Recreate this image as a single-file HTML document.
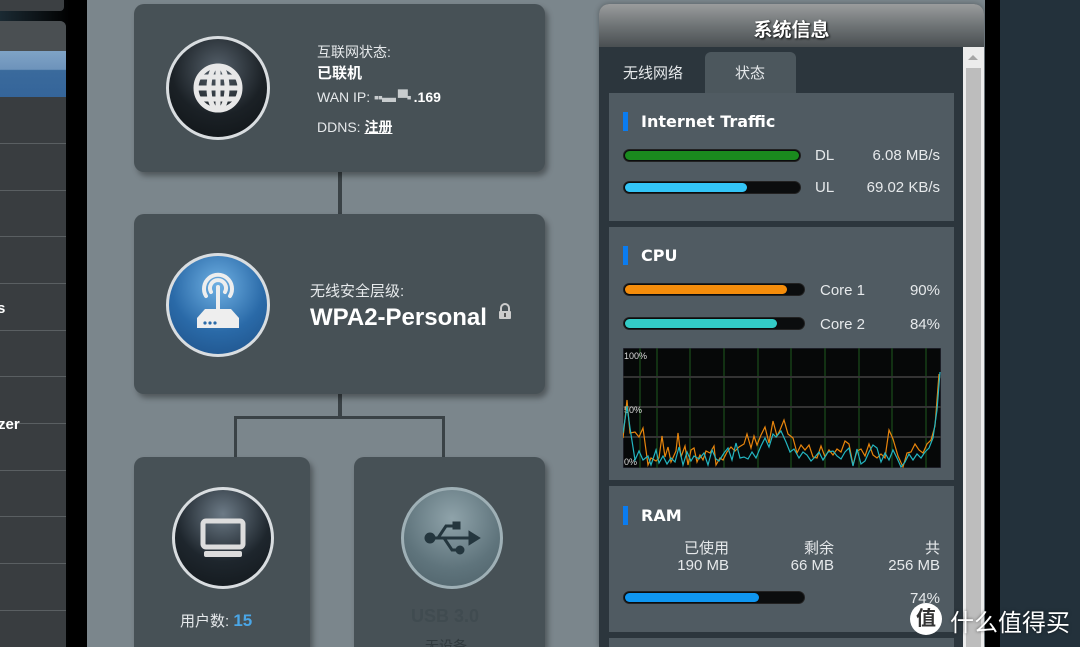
<!DOCTYPE html><html><head><meta charset="utf-8"><style>
*{margin:0;padding:0;box-sizing:border-box}
html{width:1080px;height:647px;overflow:hidden}
body{width:1080px;height:647px;overflow:hidden;background:#7b868c;position:relative;font-family:"Liberation Sans","Noto Sans CJK SC",sans-serif;color:#fff}
.a{position:absolute}
.card{position:absolute;background:#475156;border-radius:10px;box-shadow:3px 4px 6px rgba(0,0,0,.35)}
.ln{position:absolute;background:#3a4246}
.sec{position:absolute;left:609px;width:345px;background:#505b62}
.bar{position:absolute;height:13px;border-radius:7px;background:#0b0d0e;border:1px solid #222}
.bar i{position:absolute;left:1px;top:1px;bottom:1px;border-radius:6px}
.t{position:absolute;font-size:15px;color:#e6e9eb}
.hd{position:absolute;font-weight:bold;font-size:17px;color:#fff}
.blue{position:absolute;width:5px;height:19px;background:#0a7cf0}
.circ{position:absolute;border-radius:50%;border:3px solid #d9dde0}
</style></head><body>
<div class="a" style="left:0;top:0;width:87px;height:647px;background:linear-gradient(90deg,#1b2a33,#000 80%)"></div>
<div class="a" style="left:0;top:0;width:64px;height:11px;background:#3c4043;border-radius:0 0 4px 0"></div>
<div class="a" style="left:0;top:21px;width:66px;height:626px;background:#393d40;border-radius:0 6px 0 0"></div>
<div class="a" style="left:0;top:21px;width:66px;height:30px;background:#4a4f52;border-radius:0 6px 0 0"></div>
<div class="a" style="left:0;top:51px;width:66px;height:46px;background:linear-gradient(#7fa3c6 0,#6d93bb 40%,#3a6a9c 42%,#35659a)"></div>
<div class="a" style="left:0;top:143px;width:66px;height:1px;background:#5a5f62"></div>
<div class="a" style="left:0;top:190px;width:66px;height:1px;background:#5a5f62"></div>
<div class="a" style="left:0;top:236px;width:66px;height:1px;background:#5a5f62"></div>
<div class="a" style="left:0;top:283px;width:66px;height:1px;background:#5a5f62"></div>
<div class="a" style="left:0;top:330px;width:66px;height:1px;background:#5a5f62"></div>
<div class="a" style="left:0;top:376px;width:66px;height:1px;background:#5a5f62"></div>
<div class="a" style="left:0;top:423px;width:66px;height:1px;background:#5a5f62"></div>
<div class="a" style="left:0;top:470px;width:66px;height:1px;background:#5a5f62"></div>
<div class="a" style="left:0;top:516px;width:66px;height:1px;background:#5a5f62"></div>
<div class="a" style="left:0;top:563px;width:66px;height:1px;background:#5a5f62"></div>
<div class="a" style="left:0;top:610px;width:66px;height:1px;background:#5a5f62"></div>
<div class="a" style="left:-3px;top:300px;font-size:15px;font-weight:bold">s</div>
<div class="a" style="left:-2px;top:416px;font-size:15px;font-weight:bold">zer</div>
<div class="a" style="left:985px;top:0;width:95px;height:647px;background:#000"></div>
<div class="a" style="left:1000px;top:0;width:80px;height:647px;background:#23313b"></div>

<div class="ln" style="left:338px;top:170px;width:4px;height:46px"></div>
<div class="ln" style="left:338px;top:392px;width:4px;height:26px"></div>
<div class="ln" style="left:234px;top:416px;width:211px;height:3px"></div>
<div class="ln" style="left:234px;top:416px;width:3px;height:44px"></div>
<div class="ln" style="left:442px;top:416px;width:3px;height:44px"></div>

<div class="card" style="left:134px;top:4px;width:411px;height:168px"></div>
<div class="circ" style="left:166px;top:36px;width:104px;height:104px;background:radial-gradient(circle at 50% 30%,#55606a,#1b2126 55%,#0e1215)"></div>
<svg class="a" style="left:190px;top:60px" width="56" height="56" viewBox="0 0 56 56"><g fill="none" stroke="#e8e8e8" stroke-width="5"><circle cx="28" cy="28" r="22"/><ellipse cx="28" cy="28" rx="9" ry="22"/><line x1="28" y1="6" x2="28" y2="50"/><line x1="6" y1="28" x2="50" y2="28"/><line x1="10" y1="17" x2="46" y2="17"/><line x1="10" y1="39" x2="46" y2="39"/></g></svg>
<div class="t" style="left:317px;top:42px;font-size:14px">互联网状态:</div>
<div class="t" style="left:317px;top:62px;font-size:15px;font-weight:bold;color:#fff">已联机</div>
<div class="t" style="left:317px;top:89px;font-size:14px">WAN IP: <span style="color:#c8ccce;letter-spacing:-1px">▪▪▬ ▀▪ </span><b style="color:#fff">.169</b></div>
<div class="t" style="left:317px;top:117px;font-size:14px">DDNS: <b style="color:#fff;text-decoration:underline">注册</b></div>

<div class="card" style="left:134px;top:214px;width:411px;height:180px"></div>
<div class="circ" style="left:166px;top:253px;width:104px;height:104px;background:radial-gradient(circle at 50% 30%,#6fb0e3,#2a6aa8 55%,#1d4f86)"></div>
<svg class="a" style="left:175px;top:262px" width="86" height="86" viewBox="0 0 86 86"><g fill="none" stroke="#eee" stroke-width="4" stroke-linecap="round"><path d="M36 30a8 8 0 1 1 14 0"/><path d="M31 34a14 14 0 1 1 24 0"/><line x1="43" y1="25" x2="43" y2="48"/></g><path d="M22 56l8-9h26l8 9v10H22z" fill="#eee"/><g fill="#2a6aa8"><circle cx="30" cy="61" r="1.6"/><circle cx="35" cy="61" r="1.6"/><circle cx="40" cy="61" r="1.6"/></g></svg>
<div class="t" style="left:310px;top:280px;font-size:15px">无线安全层级:</div>
<div class="a" style="left:310px;top:304px;font-size:24px;font-weight:bold">WPA2-Personal</div>
<svg class="a" style="left:498px;top:303px" width="14" height="17" viewBox="0 0 14 17"><path d="M3 8V5a4 4 0 0 1 8 0v3" fill="none" stroke="#ccc" stroke-width="2"/><rect x="1" y="8" width="12" height="8" rx="1" fill="#ccc"/><rect x="6" y="10" width="2" height="4" fill="#555"/></svg>

<div class="card" style="left:134px;top:457px;width:176px;height:190px;border-radius:10px 10px 0 0"></div>
<div class="circ" style="left:172px;top:487px;width:102px;height:102px;background:radial-gradient(circle at 50% 25%,#6c7a86,#1e262d 55%,#11161a)"></div>
<svg class="a" style="left:194px;top:509px" width="58" height="58" viewBox="0 0 58 58"><rect x="9" y="12" width="40" height="26" rx="3" fill="none" stroke="#ddd" stroke-width="5"/><rect x="10" y="42" width="38" height="6" rx="2" fill="#ddd"/></svg>
<div class="t" style="left:180px;top:610px;font-size:15px">用户数: <b style="color:#4aa6e6;font-size:17px">15</b></div>

<div class="card" style="left:354px;top:457px;width:191px;height:190px;border-radius:10px 10px 0 0"></div>
<div class="circ" style="left:401px;top:487px;width:102px;height:102px;border-color:#9fb0b6;background:radial-gradient(circle at 50% 30%,#8fa3aa,#5f747c 60%,#4d6068)"></div>
<svg class="a" style="left:422px;top:514px" width="60" height="50" viewBox="0 0 60 50"><g fill="#24363e" stroke="#24363e" stroke-width="3"><line x1="6" y1="24" x2="48" y2="24"/><circle cx="8" cy="24" r="4"/><path d="M48 19l8 5-8 5z"/><path d="M16 24L24 12h8" fill="none"/><rect x="32" y="9" width="5" height="5"/><path d="M22 24l8 12h6" fill="none"/><circle cx="38" cy="36" r="3"/></g></svg>
<div class="a" style="left:411px;top:606px;font-size:18px;font-weight:bold;color:#404b50">USB 3.0</div>
<div class="a" style="left:425px;top:636px;font-size:14px;color:#30393d">无设备</div>

<div class="a" style="left:599px;top:4px;width:385px;height:643px;background:#2c363d;border-radius:10px 10px 0 0;box-shadow:0 0 6px rgba(0,0,0,.3)"></div>
<div class="a" style="left:599px;top:4px;width:385px;height:43px;border-radius:10px 10px 0 0;background:linear-gradient(#9a9c9d,#6f7476 50%,#4a4f52)"></div>
<div class="a" style="left:599px;top:15px;width:385px;text-align:center;font-size:19px;font-weight:bold;text-shadow:1px 1px 2px #000">系统信息</div>
<div class="a" style="left:963px;top:47px;width:21px;height:600px;background:#ececec"></div>
<div class="a" style="left:966px;top:68px;width:15px;height:579px;background:#bdbdbd"></div>
<div class="a" style="left:968px;top:55px;width:0;height:0;border-left:5px solid transparent;border-right:5px solid transparent;border-bottom:5px solid #a6a6a6"></div>
<div class="a" style="left:705px;top:52px;width:91px;height:42px;background:#4c575d;border-radius:6px 6px 0 0"></div>
<div class="t" style="left:623px;top:62px;font-size:15px">无线网络</div>
<div class="t" style="left:735px;top:62px;font-size:15px">状态</div>

<div class="sec" style="top:93px;height:128px"></div>
<div class="blue" style="left:623px;top:112px"></div>
<div class="hd" style="left:641px;top:112px;font-family:'DejaVu Sans',sans-serif;font-size:16px">Internet Traffic</div>
<div class="bar" style="left:623px;top:149px;width:178px"><i style="width:174px;background:#1a8a1e"></i></div>
<div class="t" style="left:815px;top:147px">DL</div>
<div class="t" style="left:850px;top:147px;width:90px;text-align:right">6.08 MB/s</div>
<div class="bar" style="left:623px;top:181px;width:178px"><i style="width:122px;background:#33c5f7"></i></div>
<div class="t" style="left:815px;top:179px">UL</div>
<div class="t" style="left:840px;top:179px;width:100px;text-align:right">69.02 KB/s</div>

<div class="sec" style="top:227px;height:253px"></div>
<div class="blue" style="left:623px;top:246px"></div>
<div class="hd" style="left:641px;top:246px;font-family:'DejaVu Sans',sans-serif;font-size:16px">CPU</div>
<div class="bar" style="left:623px;top:283px;width:182px"><i style="width:162px;background:#f58d0b"></i></div>
<div class="t" style="left:820px;top:282px">Core 1</div>
<div class="t" style="left:890px;top:282px;width:50px;text-align:right">90%</div>
<div class="bar" style="left:623px;top:317px;width:182px"><i style="width:152px;background:#33cbc6"></i></div>
<div class="t" style="left:820px;top:316px">Core 2</div>
<div class="t" style="left:890px;top:316px;width:50px;text-align:right">84%</div>
<svg class="a" style="left:623px;top:348px" width="318" height="120" viewBox="0 0 318 120">
<rect width="318" height="120" fill="#060808" stroke="#334" />
<g stroke="#1e5a1e" stroke-width="1"><line x1="17" y1="0" x2="17" y2="120"/><line x1="34" y1="0" x2="34" y2="120"/><line x1="67" y1="0" x2="67" y2="120"/><line x1="101" y1="0" x2="101" y2="120"/><line x1="135" y1="0" x2="135" y2="120"/><line x1="168" y1="0" x2="168" y2="120"/><line x1="202" y1="0" x2="202" y2="120"/><line x1="236" y1="0" x2="236" y2="120"/><line x1="269" y1="0" x2="269" y2="120"/><line x1="303" y1="0" x2="303" y2="120"/></g>
<g stroke="#333" stroke-width="2"><line x1="0" y1="29" x2="318" y2="29"/><line x1="0" y1="59" x2="318" y2="59"/><line x1="0" y1="89" x2="318" y2="89"/></g>
<g font-size="9" fill="#ddd" font-family="Liberation Sans"><text x="1" y="11">100%</text><text x="1" y="65">50%</text><text x="1" y="117">0%</text></g>
<polyline fill="none" stroke="#e8850c" stroke-width="1.2" points="0,90 4,52 7,85 12,84 16,89 20,80 25,117 28,110 33,113 36,110 39,88 42,109 45,99 48,114 53,103 55,85 58,109 62,98 65,117 68,102 71,100 74,114 77,107 80,112 83,103 87,105 91,98 93,117 97,110 100,112 104,104 108,99 112,103 116,99 121,96 124,86 128,100 131,88 134,97 138,87 142,79 146,95 150,73 154,88 157,82 161,72 165,86 170,90 174,105 178,97 182,102 186,97 190,109 194,110 198,98 202,109 206,102 210,107 214,101 218,104 222,93 226,96 230,117 234,103 238,101 242,108 246,96 250,107 254,110 258,106 262,110 266,82 270,91 275,108 280,119 284,105 288,104 292,96 296,102 300,105 304,96 308,92 312,78 316,26"/>
<polyline fill="none" stroke="#23b5c0" stroke-width="1.2" points="0,85 4,58 7,80 12,112 16,103 20,112 25,108 28,117 33,102 36,115 40,108 44,116 48,110 52,114 56,99 60,117 64,104 68,113 71,108 76,111 81,105 85,117 89,102 93,111 96,113 101,105 105,100 109,112 113,95 117,110 121,109 125,111 129,104 133,110 138,98 142,90 146,99 150,86 153,89 158,83 163,94 167,104 171,101 176,110 180,104 184,107 188,113 192,109 196,104 200,112 205,104 210,103 214,108 218,111 222,104 226,100 230,118 234,101 238,116 242,113 246,104 250,97 254,100 258,114 262,105 266,112 270,102 274,110 278,119 282,114 286,106 290,112 294,106 298,110 302,104 306,100 310,90 314,62 317,24"/>
</svg>

<div class="sec" style="top:486px;height:146px"></div>
<div class="blue" style="left:623px;top:506px"></div>
<div class="hd" style="left:641px;top:506px;font-family:'DejaVu Sans',sans-serif;font-size:16px">RAM</div>
<div class="t" style="left:660px;top:537px;width:69px;text-align:right">已使用</div>
<div class="t" style="left:660px;top:557px;width:69px;text-align:right">190 MB</div>
<div class="t" style="left:764px;top:537px;width:70px;text-align:right">剩余</div>
<div class="t" style="left:764px;top:557px;width:70px;text-align:right">66 MB</div>
<div class="t" style="left:860px;top:537px;width:80px;text-align:right">共</div>
<div class="t" style="left:860px;top:557px;width:80px;text-align:right">256 MB</div>
<div class="bar" style="left:623px;top:591px;width:182px"><i style="width:134px;background:#0f96f0"></i></div>
<div class="t" style="left:890px;top:590px;width:50px;text-align:right">74%</div>
<div class="sec" style="top:638px;height:9px"></div>

<div class="a" style="left:910px;top:603px;width:32px;height:32px;border-radius:50%;background:#fff;color:#333;font-size:20px;text-align:center;line-height:32px;font-weight:bold">值</div>
<div class="a" style="left:950px;top:603px;font-size:24px;color:#fff;text-shadow:0 0 3px rgba(0,0,0,.6)">什么值得买</div>
</body></html>
